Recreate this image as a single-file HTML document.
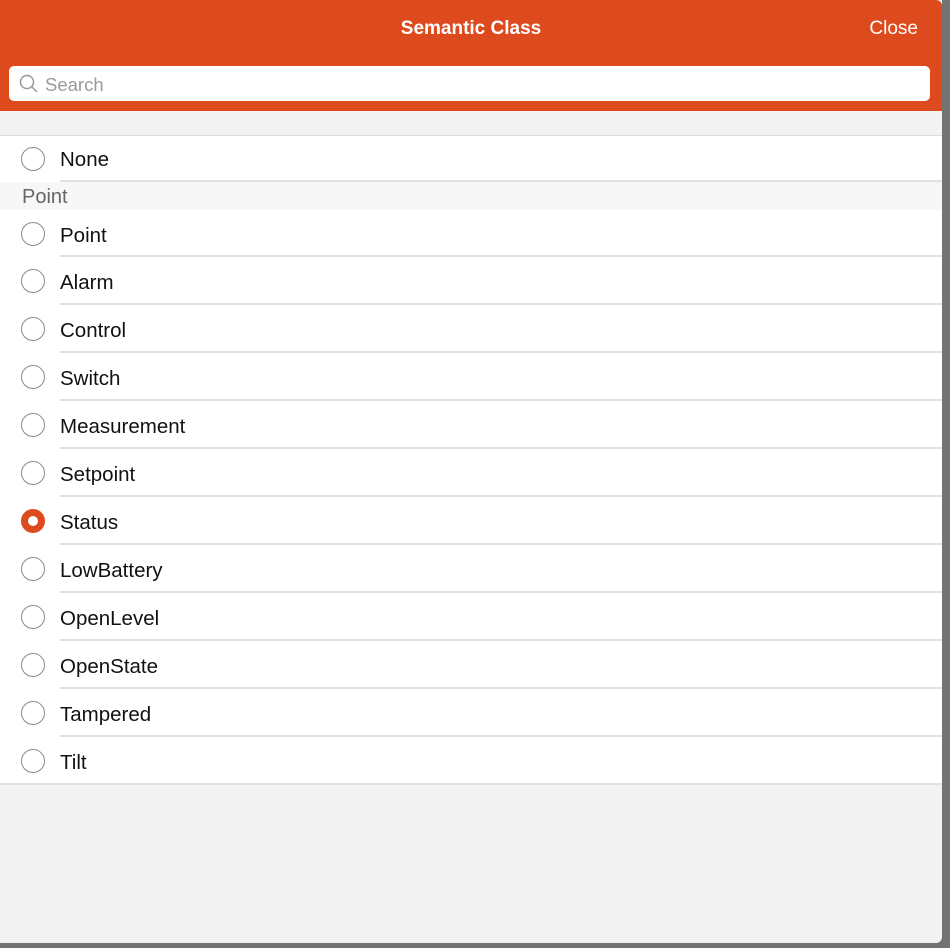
<!DOCTYPE html>
<html><head><style>
*{margin:0;padding:0;box-sizing:border-box}
body{width:950px;height:948px;background:#737373;font-family:"Liberation Sans",sans-serif;position:relative;overflow:hidden}
#panel{position:absolute;left:0;top:0;width:942px;height:943px;background:#f2f2f2;border-radius:0 0 6px 0;overflow:hidden}
#hdr{position:absolute;left:0;top:0;width:942px;height:111px;background:#dd4a1e;border-radius:0 6px 0 0}
#title{position:absolute;top:18px;left:0;width:942px;text-align:center;color:#fff;font-weight:bold;font-size:19px}
#close{position:absolute;top:18px;right:24px;color:#fff;font-size:19px}
#search{position:absolute;left:9px;top:66px;width:921px;height:35px;background:#fff;border-radius:5px}
#search span{position:absolute;left:36px;top:8px;color:#9a9a9a;font-size:18.5px}
#list{position:absolute;left:0;top:135px;width:942px;border-top:1px solid #ddd;background:#fff}
.row{position:relative;height:48px;border-bottom:2px solid #e0e0e0;margin-left:60px}
.row .r{position:absolute;left:-39px;top:12px;width:24px;height:24px;border:1px solid #8a8a8a;border-radius:50%}
.row .t{position:absolute;left:0;top:14px;font-size:20.5px;color:#111}
.row.last{margin-left:0}
.row.last .r{left:21px}.row.last .t{left:60px}
.sec{height:28px;background:#f7f7f7;padding-left:22px;font-size:20px;color:#666;line-height:30px}
.sel{border:7px solid #dd4a1e!important}
</style></head><body>
<div id="panel">
<div id="hdr"><div id="title">Semantic Class</div><div id="close">Close</div>
<div id="search"><svg width="22" height="22" style="position:absolute;left:9px;top:7px" viewBox="0 0 22 22"><circle cx="9" cy="9" r="6.5" fill="none" stroke="#999" stroke-width="1.5"/><line x1="13.5" y1="13.5" x2="19" y2="19" stroke="#999" stroke-width="1.5"/></svg><span>Search</span></div></div>
<div id="list">
<div class="row" style="height:46px"><div class="r" style="top:11px"></div><div class="t" style="top:12px">None</div></div>
<div class="sec">Point</div>
<div class="row" style="height:47px"><div class="r"></div><div class="t">Point</div></div>
<div class="row"><div class="r"></div><div class="t">Alarm</div></div>
<div class="row"><div class="r"></div><div class="t">Control</div></div>
<div class="row"><div class="r"></div><div class="t">Switch</div></div>
<div class="row"><div class="r"></div><div class="t">Measurement</div></div>
<div class="row"><div class="r"></div><div class="t">Setpoint</div></div>
<div class="row"><div class="r sel"></div><div class="t">Status</div></div>
<div class="row"><div class="r"></div><div class="t">LowBattery</div></div>
<div class="row"><div class="r"></div><div class="t">OpenLevel</div></div>
<div class="row"><div class="r"></div><div class="t">OpenState</div></div>
<div class="row"><div class="r"></div><div class="t">Tampered</div></div>
<div class="row last"><div class="r"></div><div class="t">Tilt</div></div>
</div>
</div>
</body></html>
